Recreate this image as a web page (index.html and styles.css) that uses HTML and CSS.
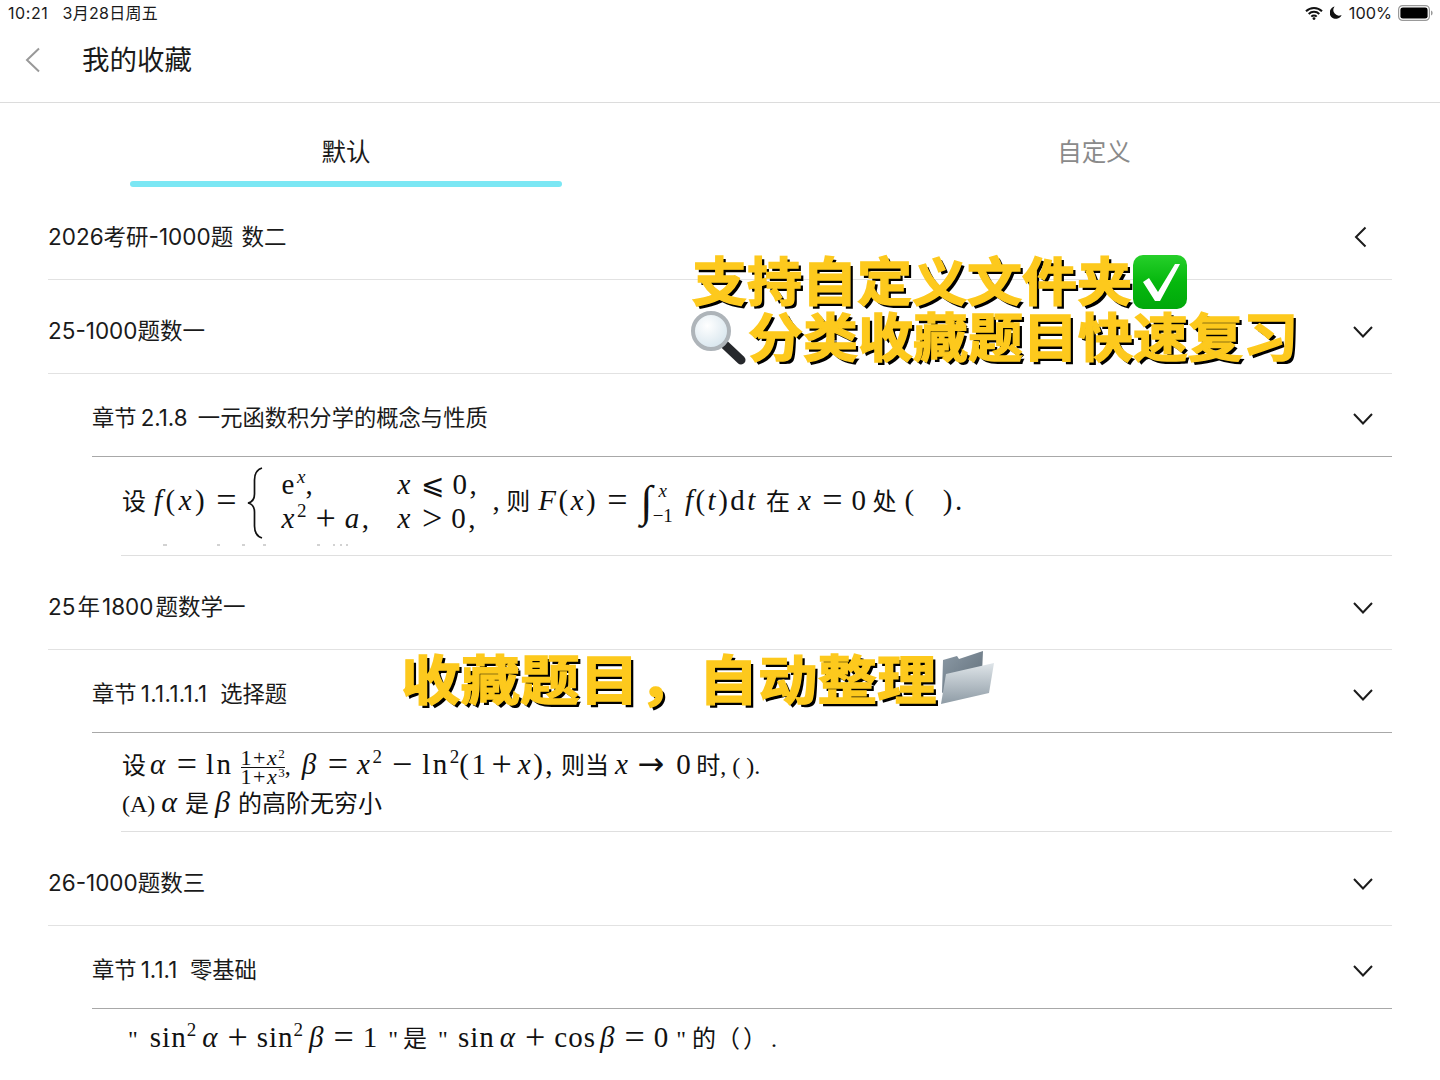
FILE: index.html
```html
<!DOCTYPE html>
<html lang="zh-CN">
<head>
<meta charset="utf-8">
<title>我的收藏</title>
<link rel="stylesheet" href="styles.css">
</head>
<body>
<div class="page">
  <div class="status">
    <div class="status-left"><span class="time">10:21</span><span class="date">3月28日周五</span></div>
    <div class="status-right">
      <svg class="wifi" viewBox="0 0 18 14" width="18" height="14"><path d="M1 5.200a11.500 11.500 0 0 1 16 0M3.700 8a7.600 7.600 0 0 1 10.600 0M6.300 10.600a3.800 3.800 0 0 1 5.400 0" fill="none" stroke="#111" stroke-width="2"/><circle cx="9" cy="12.600" r="1.400" fill="#111"/></svg>
      <svg class="moon" viewBox="0 0 12 13" width="12" height="13"><path d="M4.600.6A6.200 6.200 0 1 0 11.600 9 5.600 5.600 0 0 1 4.600.6z" fill="#111"/></svg>
      <span class="pct">100%</span>
      <svg class="battery" viewBox="0 0 35 16" width="35" height="16"><rect x=".6" y=".6" width="30.800" height="14.800" rx="4" fill="#fff" stroke="#999" stroke-width="1.200"/><rect x="2.400" y="2.400" width="27.200" height="11.200" rx="2.400" fill="#000"/><path d="M33 5.500c1.200.4 1.600 1.300 1.600 2.500s-.4 2.100-1.600 2.500z" fill="#999"/></svg>
    </div>
  </div>
  <header class="nav">
    <svg class="back" viewBox="0 0 16 26" width="16" height="26"><path d="M14 1.500 2 13l12 11.500" fill="none" stroke="#999" stroke-width="2"/></svg>
    <h1>我的收藏</h1>
  </header>
  <div class="tabs">
    <div class="tab active"><span>默认</span><i class="bar"></i></div>
    <div class="tab"><span>自定义</span></div>
  </div>
  <main class="list">
    <div class="row first"><span>2026考研-1000题 &#8202;数二</span>
      <svg class="chev" viewBox="0 0 22 22" width="22" height="22"><path d="M13.500 1.500 4 11l9.500 9.500" fill="none" stroke="#1c1c1c" stroke-width="2"/></svg></div>

    <div class="row"><span>25-1000题数一</span>
      <svg class="chev" viewBox="0 0 22 22" width="22" height="22"><path d="M2 7l9 9.500L20 7" fill="none" stroke="#1c1c1c" stroke-width="2"/></svg></div>
    <div class="sub">
      <div class="sub-row"><span>章节&#8201;<span class="num tight">2.1.8</span>&nbsp;&#8201;一元函数积分学的概念与性质</span>
        <svg class="chev" viewBox="0 0 22 22" width="22" height="22"><path d="M2 7l9 9.500L20 7" fill="none" stroke="#1c1c1c" stroke-width="2"/></svg></div>
      <div class="content">
        <div class="formula-a"><span class="cn">设</span><span class="g7"></span><span class="m w">f</span>(<span class="m w">x</span>)<span class="op">=</span><svg class="brace" viewBox="0 0 16 72" width="16" height="72"><path d="M15 1C9 3 7.500 7 7.500 13v14c0 5-2 8-6.500 9 4.500 1 6.500 4 6.500 9v14c0 6 1.500 10 7.500 12" fill="none" stroke="#111" stroke-width="1.700"/></svg><div class="cases"><span>e<sup class="m">x</sup>,</span><span><span class="m">x</span><span class="op le">⩽</span>0,</span><span><span class="m">x</span><sup>2</sup><span class="op">+</span><span class="m">a</span>,</span><span><span class="m">x</span><span class="op">&gt;</span>0,</span></div>,<span class="g4"></span><span class="cn">则</span><span class="g8"></span><span class="m">F</span>(<span class="m">x</span>)<span class="op">=</span><span class="int">∫</span><span class="limits"><span class="m">x</span><span>−1</span></span><span class="g12"></span><span class="m">f</span>(<span class="m">t</span>)d<span class="m">t</span><span class="g8"></span><span class="cn">在</span><span class="g8"></span><span class="m">x</span><span class="op">=</span>0<span class="g4"></span><span class="cn">处</span><span class="g8"></span>(<span class="g26"></span>).</div>
        <svg class="specks" viewBox="0 0 240 2" width="240" height="2"><path d="M42 1h4M96 1h3M121 1h3M142 1h3M196 1h3M212 1h2M219 1h2M225 1h2" stroke="#c4c4c4" stroke-width="1.500"/></svg>
      </div>
    </div>

    <div class="row"><span>25&#8202;年&#8202;1800&#8202;题数学一</span>
      <svg class="chev" viewBox="0 0 22 22" width="22" height="22"><path d="M2 7l9 9.500L20 7" fill="none" stroke="#1c1c1c" stroke-width="2"/></svg></div>
    <div class="sub">
      <div class="sub-row"><span>章节&#8201;<span class="num">1.1.1.1.1</span>&nbsp; 选择题</span>
        <svg class="chev" viewBox="0 0 22 22" width="22" height="22"><path d="M2 7l9 9.500L20 7" fill="none" stroke="#1c1c1c" stroke-width="2"/></svg></div>
      <div class="content text-b">
        <div class="line"><span class="cn">设</span><span class="g4"></span><span class="m">α</span><span class="op">=</span>ln<span class="g7"></span><span class="frac"><span>1+<span class="m">x</span><sup>2</sup></span><span>1+<span class="m">x</span><sup>3</sup></span></span><span class="tiny">,</span><span class="g11"></span><span class="m">β</span><span class="op">=</span><span class="m">x</span><sup>2</sup><span class="op wide">−</span>ln<sup>2</sup>(1<span class="op plus">+</span><span class="m">x</span>),<span class="g6"></span><span class="cn">则当</span><span class="g6"></span><span class="m">x</span><span class="op arrow">→</span>0<span class="g3"></span><span class="cn">时</span><span class="tiny">, ( ).</span></div>
        <div class="line small">(A)<span class="g6"></span><span class="m big">α</span><span class="g8"></span><span class="cn">是</span><span class="g6"></span><span class="m big">β</span><span class="g8"></span><span class="cn">的高阶无穷小</span></div>
      </div>
    </div>

    <div class="row"><span>26-1000题数三</span>
      <svg class="chev" viewBox="0 0 22 22" width="22" height="22"><path d="M2 7l9 9.500L20 7" fill="none" stroke="#1c1c1c" stroke-width="2"/></svg></div>
    <div class="sub">
      <div class="sub-row"><span>章节&#8201;<span class="num short">1.1.1</span>&nbsp; 零基础</span>
        <svg class="chev" viewBox="0 0 22 22" width="22" height="22"><path d="M2 7l9 9.500L20 7" fill="none" stroke="#1c1c1c" stroke-width="2"/></svg></div>
      <div class="content text-c">
        <div class="line"><span class="g6"></span><span class="q">"</span><span class="g12"></span>sin<sup>2</sup><span class="g6"></span><span class="m">α</span><span class="op">+</span>sin<sup>2</sup><span class="g6"></span><span class="m">β</span><span class="op">=</span>1<span class="g10"></span><span class="q">"</span><span class="g5"></span><span class="cn">是</span><span class="g11"></span><span class="q">"</span><span class="g10"></span>sin<span class="g5"></span><span class="m">α</span><span class="op">+</span>cos<span class="g4"></span><span class="m">β</span><span class="op">=</span>0<span class="g7"></span><span class="q">"</span><span class="g6"></span><span class="cn">的</span><span class="cn paren">（）</span><span class="dot">.</span></div>
      </div>
    </div>
  </main>

  <div class="callout callout-a">
    <div class="callout-line"><span class="callout-text">支持自定义文件夹</span><svg class="emoji" viewBox="0 0 56 56" width="56" height="56"><defs><linearGradient id="g1" x1="0" y1="0" x2="0" y2="1"><stop offset="0" stop-color="#26cf2a"/><stop offset=".5" stop-color="#06b80e"/><stop offset="1" stop-color="#00a80a"/></linearGradient></defs><rect x="1" y="1" width="54" height="54" rx="10" fill="url(#g1)"/><path d="M11 28l6-4 9 14L43 10h5L28 47h-5z" fill="#fff"/></svg></div>
    <div class="callout-line"><svg class="emoji" viewBox="0 0 56 56" width="56" height="56"><defs><radialGradient id="g2" cx=".4" cy=".35" r=".8"><stop offset="0" stop-color="#fff"/><stop offset="1" stop-color="#cfe0ea"/></radialGradient></defs><path d="M33 33l18 17" stroke="#26282c" stroke-width="9" stroke-linecap="round"/><circle cx="21" cy="21" r="18" fill="url(#g2)" stroke="#aeb4b9" stroke-width="4"/></svg><span class="callout-text">分类收藏题目快速复习</span></div>
  </div>
  <div class="callout callout-b">
    <div class="callout-line"><span class="callout-text">收藏题目，自动整理</span><svg class="emoji" viewBox="0 0 58 56" width="58" height="56"><defs><linearGradient id="g3" x1="0" y1="0" x2="1" y2="1"><stop offset="0" stop-color="#8c9aa6"/><stop offset="1" stop-color="#5f6d78"/></linearGradient><linearGradient id="g4" x1="0" y1="0" x2="0" y2="1"><stop offset="0" stop-color="#dfe5e9"/><stop offset="1" stop-color="#8e9ba5"/></linearGradient></defs><path d="M6 12l14-4 2 3 24-8-1 22-40 20z" fill="url(#g3)"/><path d="M9 26l48-11-5 30-48 11z" fill="url(#g4)"/></svg></div>
  </div>
</div>
</body>
</html>
```
FILE: styles.css
```css
* { box-sizing: border-box; }
html, body { margin: 0; padding: 0; background: #fff; }
.page {
  position: relative;
  width: 1440px;
  height: 1080px;
  overflow: hidden;
  color: #1a1a1a;
  font-family: Inter, "Noto Sans CJK SC", sans-serif;
}
.status {
  height: 27px;
  padding: 0 7px 2px 8px;
  display: flex;
  justify-content: space-between;
  align-items: center;
  font-size: 16px;
  line-height: 20px;
}
.status-left { display: flex; align-items: center; gap: 14px; }
.time { letter-spacing: .6px; }
.date { letter-spacing: .3px; }
.status-right { display: flex; align-items: center; }
.wifi { margin-right: 7px; }
.moon { margin-right: 7px; }
.pct { margin-right: 6px; font-size: 16.300px; }
.nav {
  height: 76px;
  display: flex;
  align-items: center;
  padding: 0 0 10px 25px;
  border-bottom: 1px solid #dcdcdc;
}
.nav h1 { margin: 0 0 0 41px; font-size: 27.500px; font-weight: 400; line-height: 36px; }
.tabs { display: flex; gap: 56px; height: 84px; }
.tab {
  flex: 1;
  display: flex;
  flex-direction: column;
  align-items: center;
  padding-top: 32px;
  font-size: 24.500px;
  line-height: 34px;
  color: #8a8a8a;
}
.tab.active { color: #1a1a1a; }
.bar { display: block; width: 432px; height: 6px; margin-top: 12px; border-radius: 3px; background: #7be7f4; }
.list { padding: 0 48px; }
.row, .sub-row {
  display: flex;
  justify-content: space-between;
  align-items: center;
  line-height: 30px;
}
.row { height: 94px; padding: 8px 18px 0 0; border-bottom: 1px solid #e2e2e2; font-size: 22.500px; }
.row.first { height: 93px; }
.sub { margin-left: 44px; }
.sub-row { height: 83px; padding: 6px 18px 0 0; border-bottom: 1px solid #a8a8a8; font-size: 22.300px; }
.num { letter-spacing: .4px; }
.num.tight { letter-spacing: 0; }
.num.short { letter-spacing: .1px; }
.content {
  margin-left: 29px;
  height: 99px;
  border-bottom: 1px solid #dfdfdf;
  font-family: "Liberation Serif", "Noto Sans CJK SC", serif;
  font-size: 29px;
  letter-spacing: 2.500px;
  color: #111;
}
.content.text-b { padding: 12px 0 0 1px; }
.content.text-c { padding: 9px 0 0 1px; letter-spacing: 1px; }
.formula-a { height: 87px; padding: 6px 0 0 1px; line-height: 73px; white-space: nowrap; }
.specks { display: block; }
.line { height: 38px; line-height: 38px; white-space: nowrap; }
.line.small { font-size: 24px; letter-spacing: 0; }
.m { font-style: italic; }
.m.w { margin: 0 1px; }
.m.big { font-size: 30px; }
.cn { font-family: "Noto Sans CJK SC", sans-serif; font-size: 24px; letter-spacing: 0; font-style: normal; }
.op { margin: 0 9px; font-size: 36px; line-height: 0; letter-spacing: 0; vertical-align: -2px; }
.op.wide { margin: 0 10px; }
.op.plus { margin: 0 6px 0 3px; }
.op.le { font-family: "DejaVu Sans", sans-serif; font-size: 28px; vertical-align: 0; margin: 0 8px; }
.op.arrow { font-family: "DejaVu Sans", sans-serif; font-size: 32px; vertical-align: -1px; margin: 0 12px 0 7px; }
.g3, .g4, .g5, .g6, .g7, .g8, .g10, .g11, .g12, .g26 { display: inline-block; }
.g3 { width: 3px; } .g4 { width: 4px; } .g5 { width: 5px; } .g6 { width: 6px; } .g7 { width: 7px; } .g8 { width: 8px; }
.g10 { width: 10px; } .g11 { width: 11px; } .g12 { width: 12px; } .g26 { width: 26px; }
sup { font-size: 19px; line-height: 0; vertical-align: 11px; letter-spacing: 0; }
.brace { margin: 0 19px 0 1px; vertical-align: middle; }
.cases {
  display: inline-grid;
  grid-template-columns: 116px auto;
  grid-auto-rows: 34px;
  align-items: center;
  width: 211px;
  margin-bottom: 5px;
  line-height: 34px;
  vertical-align: middle;
}
.int { font-size: 44px; line-height: 0; font-style: italic; letter-spacing: 0; vertical-align: -6px; margin-left: 4px; }
.limits {
  display: inline-flex;
  flex-direction: column;
  align-items: center;
  vertical-align: middle;
  font-size: 19px;
  line-height: 25px;
  letter-spacing: 0;
}
.frac {
  display: inline-flex;
  flex-direction: column;
  align-items: center;
  vertical-align: middle;
  font-size: 22px;
  line-height: 18px;
  letter-spacing: 1.500px;
}
.frac > span + span { border-top: 1px solid #111; }
.frac sup { font-size: 13px; vertical-align: 7px; }
.tiny { font-size: 24px; letter-spacing: 0; }
.q { font-size: 24px; letter-spacing: 0; }
.paren { letter-spacing: 3px; }
.dot { margin-left: 1px; font-size: 24px; }
.callout {
  position: absolute;
  font-family: "Noto Sans CJK SC", sans-serif;
  font-weight: 700;
  color: #fdc91d;
  -webkit-text-stroke: 1.500px #fdc91d;
  text-shadow: 3px 3px 0 #000;
  white-space: nowrap;
}
.callout-line { display: flex; align-items: center; }
.callout-text { line-height: 50px; padding-bottom: 5px; transform: scaleY(.94); transform-origin: top; }
.callout-a { left: 692px; top: 254px; font-size: 55px; }
.callout-a .callout-line { height: 56px; }
.callout-a .callout-line svg:first-child { margin-left: -2px; margin-right: 2px; }
.callout-b { left: 401px; top: 648px; font-size: 59.500px; }
.callout-b .callout-text { transform: translateY(5px) scaleY(.9); }
.emoji { flex: none; }
```
